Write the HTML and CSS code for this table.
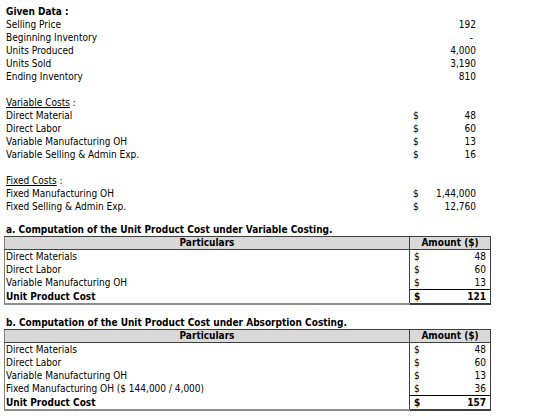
FILE: index.html
```html
<!DOCTYPE html>
<html>
<head>
<meta charset="utf-8">
<link rel="stylesheet" href="styles.css">
</head>
<body>
<div class="sheet">
  <div class="rows">
    <div class="label bold">Given Data :</div><div class="amt"></div>
    <div class="label">Selling Price</div><div class="amt"><span></span><span>192</span></div>
    <div class="label">Beginning Inventory</div><div class="amt"><span></span><span class="dash">-</span></div>
    <div class="label">Units Produced</div><div class="amt"><span></span><span>4,000</span></div>
    <div class="label">Units Sold</div><div class="amt"><span></span><span>3,190</span></div>
    <div class="label">Ending Inventory</div><div class="amt"><span></span><span>810</span></div>
    <div class="label blank"></div><div class="amt"></div>
    <div class="label"><u>Variable Costs</u> :</div><div class="amt"></div>
    <div class="label">Direct Material</div><div class="amt"><span>$</span><span>48</span></div>
    <div class="label">Direct Labor</div><div class="amt"><span>$</span><span>60</span></div>
    <div class="label">Variable Manufacturing OH</div><div class="amt"><span>$</span><span>13</span></div>
    <div class="label">Variable Selling &amp; Admin Exp.</div><div class="amt"><span>$</span><span>16</span></div>
    <div class="label blank"></div><div class="amt"></div>
    <div class="label"><u>Fixed Costs</u> :</div><div class="amt"></div>
    <div class="label">Fixed Manufacturing OH</div><div class="amt"><span>$</span><span>1,44,000</span></div>
    <div class="label">Fixed Selling &amp; Admin Exp.</div><div class="amt"><span>$</span><span>12,760</span></div>
  </div>

  <div class="title first">a. Computation of the Unit Product Cost under Variable Costing.</div>
  <table class="calc">
    <tr class="head"><th class="part">Particulars</th><th class="money">Amount ($)</th></tr>
    <tr><td class="part">Direct Materials</td><td class="money"><span class="cell"><span>$</span><span>48</span></span></td></tr>
    <tr><td class="part">Direct Labor</td><td class="money"><span class="cell"><span>$</span><span>60</span></span></td></tr>
    <tr><td class="part">Variable Manufacturing OH</td><td class="money"><span class="cell"><span>$</span><span>13</span></span></td></tr>
    <tr class="total"><td class="part">Unit Product Cost</td><td class="money"><span class="cell"><span>$</span><span>121</span></span></td></tr>
  </table>

  <div class="title second">b. Computation of the Unit Product Cost under Absorption Costing.</div>
  <table class="calc">
    <tr class="head"><th class="part">Particulars</th><th class="money">Amount ($)</th></tr>
    <tr><td class="part">Direct Materials</td><td class="money"><span class="cell"><span>$</span><span>48</span></span></td></tr>
    <tr><td class="part">Direct Labor</td><td class="money"><span class="cell"><span>$</span><span>60</span></span></td></tr>
    <tr><td class="part">Variable Manufacturing OH</td><td class="money"><span class="cell"><span>$</span><span>13</span></span></td></tr>
    <tr><td class="part">Fixed Manufacturing OH ($ 144,000 / 4,000)</td><td class="money"><span class="cell"><span>$</span><span>36</span></span></td></tr>
    <tr class="total"><td class="part">Unit Product Cost</td><td class="money"><span class="cell"><span>$</span><span>157</span></span></td></tr>
  </table>
</div>
</body>
</html>
```

FILE: styles.css
```css
html, body {
  margin: 0;
  padding: 0;
  background: #ffffff;
}

body {
  font-family: "DejaVu Sans Condensed", "DejaVu Sans", sans-serif;
  font-size: 10px;
  line-height: 13px;
  color: #000000;
}

.sheet {
  padding-top: 5px;
  width: 481px;
}

.rows {
  display: grid;
  grid-template-columns: 408px 73px;
  grid-auto-rows: 13px;
}

.label {
  padding-left: 6px;
  white-space: nowrap;
}

.bold {
  font-weight: bold;
}

.amt {
  display: flex;
  justify-content: space-between;
  padding: 0 5px 0 5px;
}

.dash {
  padding-right: 3px;
}

.title {
  font-weight: bold;
  padding-left: 6px;
  height: 12px;
  line-height: 12px;
}

.title.first {
  margin-top: 11px;
}

.title.second {
  margin-top: 12px;
}

.calc {
  border-collapse: collapse;
  margin-left: 4px;
  width: 477px;
  table-layout: fixed;
}

.calc td, .calc th {
  padding: 0;
  height: 13px;
  line-height: 13px;
  white-space: nowrap;
}

.calc .part {
  width: 404px;
  padding-left: 1px;
  border-left: 1px solid #7f7f7f;
  text-align: left;
}

.calc .money {
  width: 72px;
  border-left: 1px solid #3f3f3f;
  border-right: 1px solid #3f3f3f;
  padding: 0 4px;
}

.calc .head th {
  height: 12px;
  line-height: 12px;
  background: #d9d9d9;
  font-weight: bold;
  text-align: center;
  border-top: 1px solid #3f3f3f;
  border-bottom: 1px solid #3f3f3f;
}

.calc .head th.part {
  padding-left: 0;
}

.cell {
  display: flex;
  justify-content: space-between;
}

.calc .total td {
  font-weight: bold;
  border-bottom: 2px solid #8c8c8c;
}

.calc .total td.money {
  border-top: 1px solid #000000;
  border-bottom: 2px solid #3f3f3f;
}
```
